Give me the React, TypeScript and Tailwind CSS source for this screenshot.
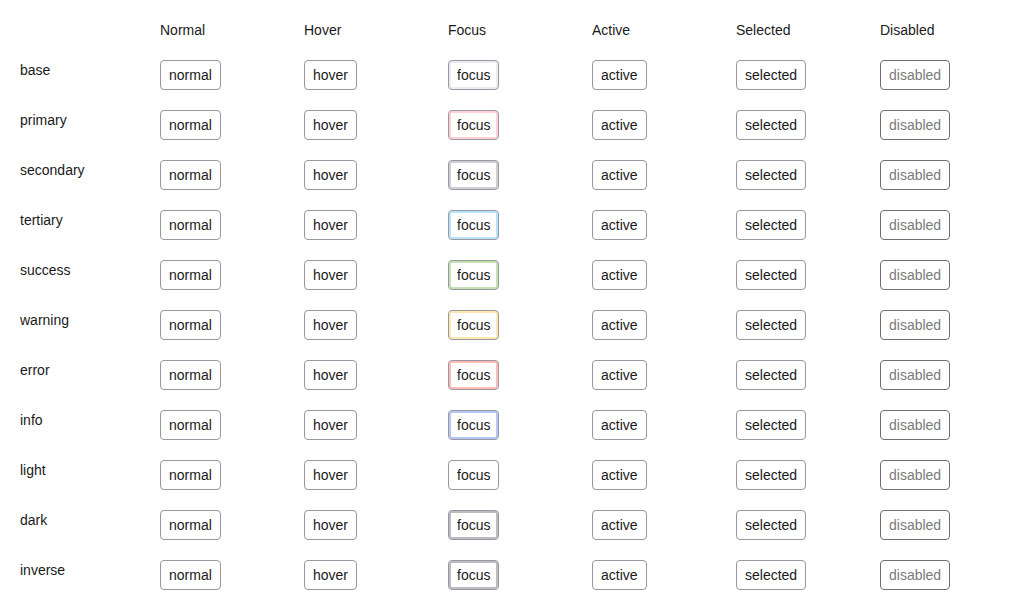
import React from 'react';

const states = ['Normal', 'Hover', 'Focus', 'Active', 'Selected', 'Disabled'];

const variants: { name: string; ring: string }[] = [
  { name: 'base', ring: 'shadow-[inset_0_0_0_2px_#ececf0]' },
  { name: 'primary', ring: 'shadow-[inset_0_0_0_2px_#ffd0d4]' },
  { name: 'secondary', ring: 'shadow-[inset_0_0_0_2px_#cfcfd3]' },
  { name: 'tertiary', ring: 'shadow-[inset_0_0_0_2px_#b5e4fb]' },
  { name: 'success', ring: 'shadow-[inset_0_0_0_2px_#c4e3b0]' },
  { name: 'warning', ring: 'shadow-[inset_0_0_0_2px_#ffe8ad]' },
  { name: 'error', ring: 'shadow-[inset_0_0_0_2px_#ffbcb4]' },
  { name: 'info', ring: 'shadow-[inset_0_0_0_2px_#b3c8f2]' },
  { name: 'light', ring: '' },
  { name: 'dark', ring: 'shadow-[inset_0_0_0_2px_#bdbcc0]' },
  { name: 'inverse', ring: 'shadow-[inset_0_0_0_2px_#bdbcc0]' },
];

const Btn: React.FC<{ label: string; ring?: string }> = ({ label, ring = '' }) => {
  const disabled = label === 'disabled';
  return (
    <button
      className={`h-[30px] px-2 rounded-[4px] border bg-white text-[14px] leading-none ${
        disabled ? 'border-[#6f6f73] text-[#7a7a7a]' : 'border-[#9a96a4] text-[#1a1a1a]'
      } ${ring}`}
    >
      {label}
    </button>
  );
};

const App: React.FC = () => {
  return (
    <div className="w-[1024px] h-[610px] bg-white pl-5 text-[#1a1a1a] text-[14px] font-['Liberation_Sans',Arial,sans-serif]">
      {/* Header */}
      <div className="grid grid-cols-[140px_repeat(6,144px)] h-[50px] pt-5 leading-5">
        <div />
        {states.map((s) => (
          <div key={s}>{s}</div>
        ))}
      </div>

      {/* Rows */}
      {variants.map((v) => (
        <div key={v.name} className="grid grid-cols-[140px_repeat(6,144px)] h-[50px] pt-[10px] items-start">
          <div className="leading-5">{v.name}</div>
          <div><Btn label="normal" /></div>
          <div><Btn label="hover" /></div>
          <div><Btn label="focus" ring={v.ring} /></div>
          <div><Btn label="active" /></div>
          <div><Btn label="selected" /></div>
          <div><Btn label="disabled" /></div>
        </div>
      ))}
    </div>
  );
};

export default App;
